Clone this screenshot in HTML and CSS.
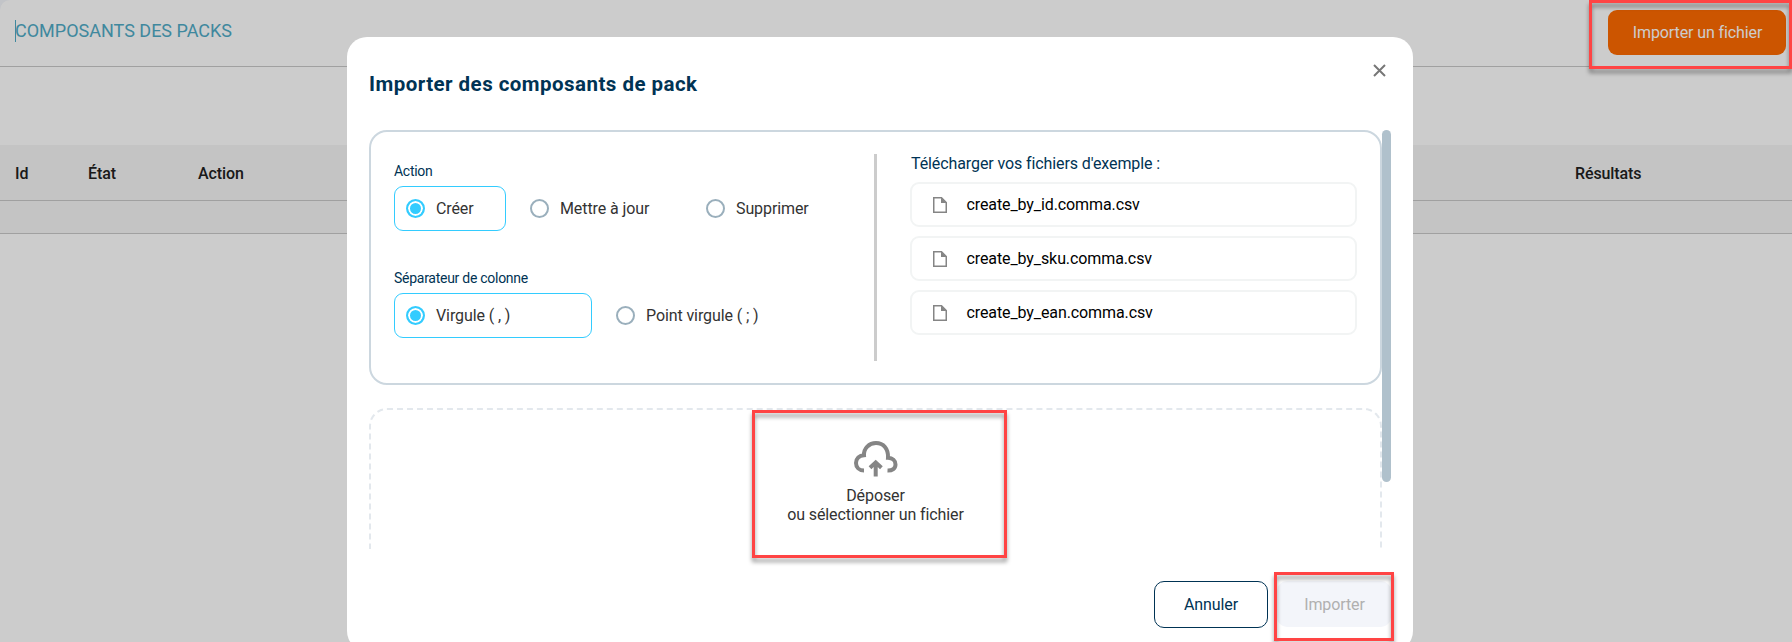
FILE: index.html
```html
<!DOCTYPE html>
<html lang="fr">

<head>
  <meta charset="utf-8">
  <title>Composants des packs</title>
  <link rel="stylesheet" href="styles.css">
</head>

<body>
  <div class="page">
    <header class="topbar">
      <h1>COMPOSANTS DES PACKS</h1>
      <button class="btn-primary">Importer un fichier</button>
    </header>
    <div class="toolbar"></div>
    <div class="table-head">
      <span>Id</span>
      <span>État</span>
      <span>Action</span>
      <span>Résultats</span>
    </div>
    <div class="table-row"></div>
  </div>

  <div class="overlay">
    <div class="modal">
      <div class="modal-header">
        <h2>Importer des composants de pack</h2>
        <svg class="close" width="13" height="13" viewBox="0 0 13 13">
          <path d="M1 1L12 12M12 1L1 12" />
        </svg>
      </div>

      <div class="modal-body">
        <div class="scroll-content">
          <div class="card">
            <div class="options">
              <div class="label">Action</div>
              <div class="radios radios-action">
                <label class="radio checked"><i></i>Créer</label>
                <label class="radio"><i></i>Mettre à jour</label>
                <label class="radio"><i></i>Supprimer</label>
              </div>
              <div class="label">Séparateur de colonne</div>
              <div class="radios radios-separator">
                <label class="radio checked"><i></i>Virgule ( , )</label>
                <label class="radio"><i></i>Point virgule ( ; )</label>
              </div>
            </div>
            <div class="divider"></div>
            <div class="samples">
              <div class="samples-title">Télécharger vos fichiers d'exemple :</div>
              <a class="file">
                <svg width="14" height="16" viewBox="0 0 14 16"><path class="sheet" d="M.75 .75H8.5L13.25 5.5V15.25H.75Z" /><path class="fold" d="M8 .5V6H13.5Z" /></svg>
                create_by_id.comma.csv
              </a>
              <a class="file">
                <svg width="14" height="16" viewBox="0 0 14 16"><path class="sheet" d="M.75 .75H8.5L13.25 5.5V15.25H.75Z" /><path class="fold" d="M8 .5V6H13.5Z" /></svg>
                create_by_sku.comma.csv
              </a>
              <a class="file">
                <svg width="14" height="16" viewBox="0 0 14 16"><path class="sheet" d="M.75 .75H8.5L13.25 5.5V15.25H.75Z" /><path class="fold" d="M8 .5V6H13.5Z" /></svg>
                create_by_ean.comma.csv
              </a>
            </div>
          </div>

          <div class="dropzone">
            <svg class="cloud" width="44" height="36" viewBox="0 0 44 36">
              <path d="M10 29.6C5.2 29.6 2 26.3 2 22C2 17.6 5.4 14.5 10 14.2C9.6 7.4 15 2 22 2C29.3 2 34.6 7.6 34 16.8C38.5 17 41.5 19.6 41.5 23.5C41.5 27.3 38.3 29.8 33.5 29.6" />
              <path d="M21.7 35.5V22M16 26.7L21.7 21.4L27.4 26.7" />
            </svg>
            <div>Déposer</div>
            <div>ou sélectionner un fichier</div>
          </div>
        </div>
        <div class="scrollbar"></div>
      </div>

      <div class="modal-footer">
        <button class="btn-cancel">Annuler</button>
        <button class="btn-import">Importer</button>
      </div>
    </div>
  </div>

  <div class="highlight highlight-open"></div>
  <div class="highlight highlight-drop"></div>
  <div class="highlight highlight-import"></div>
</body>

</html>
```
FILE: styles.css
```css
* {
  box-sizing: border-box;
}

body {
  position: relative;
  overflow: hidden;
  margin: 0;
  height: 642px;
  background: #f3f5fa;
  font-family: Roboto, sans-serif;
  font-size: 16px;
  line-height: 19px;
  letter-spacing: -0.1px;
}

button {
  padding: 0;
  border: 0;
  font: inherit;
  letter-spacing: inherit;
}

.page {
  height: 642px;
  background: white;
  border-top-left-radius: 10px;
}

.topbar {
  display: flex;
  justify-content: space-between;
  align-items: flex-start;
  height: 67px;
  padding: 10px 6px 0 15px;
  border-bottom: 1px solid #c8c8c8;
}

.topbar h1 {
  margin: 10px 0 0;
  height: 22px;
  border-left: 1px solid #4fabc6;
  color: #4fabc6;
  font-size: 18px;
  font-weight: 400;
  line-height: 22px;
  text-indent: -1px;
  letter-spacing: 0;
}

.btn-primary {
  width: 178px;
  height: 45px;
  border-radius: 9px;
  background: #ff6b00;
  color: white;
  text-indent: 1px;
}

.toolbar {
  height: 78px;
}

.table-head {
  display: grid;
  grid-template-columns: 73px 110px 1377px auto;
  align-items: center;
  height: 56px;
  padding: 2px 0 0 15px;
  border-bottom: 1px solid #c8c8c8;
  background: #f5f5f5;
  color: #212121;
  font-weight: 500;
}

.table-row {
  height: 33px;
  border-bottom: 1px solid #c8c8c8;
  background: #f5f5f5;
}

.overlay {
  position: absolute;
  inset: 0;
  padding: 37px 0 0 347px;
  background: rgba(0, 0, 0, 0.2);
}

.modal {
  width: 1066px;
  height: 614px;
  padding: 0 22px;
  border-radius: 20px;
  background: white;
}

.modal-header {
  display: flex;
  justify-content: space-between;
  height: 93px;
  padding: 27px 5px 0 0;
}

.modal-header h2 {
  margin: 8px 0 0;
  color: #003354;
  font-size: 20.5px;
  font-weight: 700;
  line-height: 24px;
  letter-spacing: 0.46px;
}

.close {
  fill: none;
  stroke: #777;
  stroke-width: 2;
}

.modal-body {
  display: flex;
  height: 419px;
}

.scroll-content {
  width: 1013px;
  overflow: hidden;
}

.scrollbar {
  width: 9px;
  height: 352px;
  border-radius: 5px;
  background: #b0c1cc;
}

.card {
  display: flex;
  height: 255px;
  margin-bottom: 23px;
  padding: 22px 23px;
  border: 2px solid #ccd7df;
  border-radius: 18px;
}

.options {
  width: 480px;
  padding-top: 7px;
}

.label {
  height: 25px;
  color: #003354;
  font-size: 14px;
  line-height: 20px;
  letter-spacing: -0.27px;
}

.radios {
  display: grid;
  color: #333;
}

.radios-action {
  grid-template-columns: 112px 176px auto;
  column-gap: 12px;
  margin-bottom: 37px;
}

.radios-action .radio:nth-child(3) {
  margin-left: -12px;
}

.radios-separator {
  grid-template-columns: 198px auto;
  column-gap: 12px;
}

.radio {
  display: flex;
  align-items: center;
  gap: 11px;
  height: 45px;
  padding-left: 11px;
  border: 1px solid transparent;
  border-radius: 9px;
}

.radio i {
  width: 19px;
  height: 19px;
  border: 2px solid #9aafbc;
  border-radius: 50%;
}

.radio.checked {
  border-color: #33ccff;
}

.radio.checked i {
  border-color: #33ccff;
  background: #33ccff;
  box-shadow: inset 0 0 0 2px white;
}

.divider {
  width: 3px;
  height: 207px;
  background: #ccc;
}

.samples {
  display: flex;
  flex-direction: column;
  gap: 9px;
  width: 447px;
  margin-left: 33px;
}

.samples-title {
  color: #003354;
  text-indent: 1px;
}

.file {
  display: flex;
  align-items: center;
  gap: 20px;
  height: 45px;
  padding-left: 20.5px;
  border: 2px solid #f2f4f4;
  border-radius: 9px;
  color: black;
}

.sheet {
  fill: none;
  stroke: #858585;
  stroke-width: 1.5;
}

.fold {
  fill: #858585;
}

.dropzone {
  height: 200px;
  padding-top: 31px;
  border: 2px dashed #e3e8ed;
  border-radius: 18px;
  color: #333;
  text-align: center;
}

.cloud {
  display: block;
  margin: 0 auto 9px;
  fill: none;
  stroke: #858585;
  stroke-width: 4;
}

.modal-footer {
  display: flex;
  justify-content: flex-end;
  gap: 9px;
  padding-top: 32px;
}

.btn-cancel,
.btn-import {
  width: 114px;
  height: 47px;
  border-radius: 10px;
}

.btn-cancel {
  border: 1px solid #003354;
  background: white;
  color: #003354;
}

.btn-import {
  height: 46px;
  background: #f3f5fa;
  color: #b0b0b0;
  text-indent: 1px;
}

/* red callout frames */
.highlight {
  position: absolute;
  border: 3px solid #ff4444;
  filter: drop-shadow(0 4px 2px rgba(0, 0, 0, 0.4));
}

.highlight-open {
  top: 0;
  right: 0;
  width: 203px;
  height: 69px;
}

.highlight-drop {
  top: 410px;
  left: 752px;
  width: 255px;
  height: 148px;
}

.highlight-import {
  top: 572px;
  left: 1274px;
  width: 120px;
  height: 69px;
}
```
